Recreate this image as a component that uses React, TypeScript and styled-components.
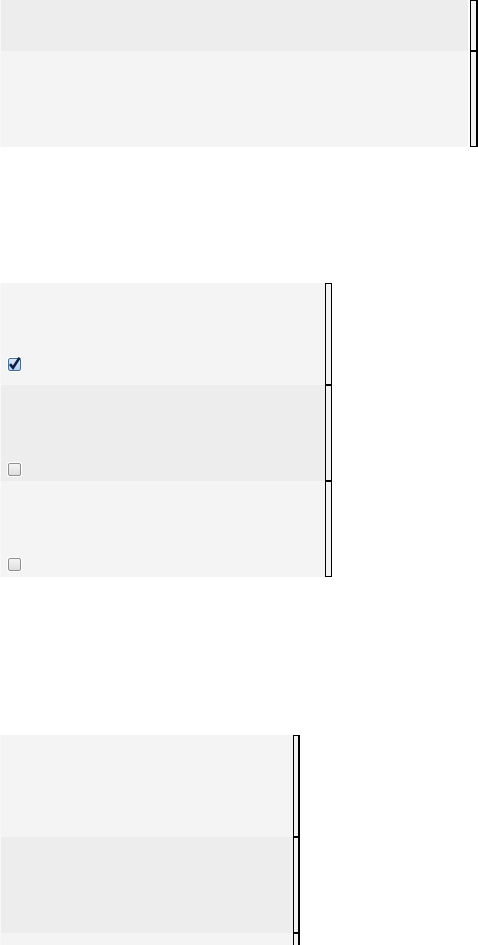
import styled, { createGlobalStyle } from "styled-components";

const Global = createGlobalStyle`
  html, body {
    margin: 0;
    padding: 0;
    background: #ffffff;
    font-family: "Liberation Sans", Arial, sans-serif;
  }
`;

const Page = styled.div`
  display: flex;
  flex-direction: column;
  width: 478px;
  height: 945px;
  overflow: hidden;
`;

const Group = styled.div<{ $width: number; $top: number }>`
  display: flex;
  flex-direction: column;
  width: ${({ $width }) => $width}px;
  margin-top: ${({ $top }) => $top}px;
  flex-shrink: 0;
`;

const Row = styled.div<{ $height: number }>`
  display: flex;
  height: ${({ $height }) => $height}px;
  flex-shrink: 0;
`;

const Cell = styled.div<{ $dark: boolean; $gap: number; $pad: number }>`
  flex: 1;
  display: flex;
  align-items: flex-start;
  padding: ${({ $pad }) => $pad}px 0 0 7px;
  margin-right: ${({ $gap }) => $gap}px;
  background: ${({ $dark }) => ($dark ? "#ededed" : "#f4f4f4")};
  border-left: 1px solid #f8f8f8;
`;

const Handle = styled.div<{ $width: number; $right: number }>`
  box-sizing: border-box;
  width: ${({ $width }) => $width}px;
  border: 1px solid #000;
  border-right-width: ${({ $right }) => $right}px;
  background: #f2f2f2;
`;

const Box = styled.span<{ $checked: boolean }>`
  box-sizing: border-box;
  display: inline-flex;
  align-items: center;
  justify-content: center;
  width: 13px;
  height: 13px;
  border-radius: 2px;
  border: 1px solid ${({ $checked }) => ($checked ? "#3d6ea8" : "#8f8f8f")};
  background: ${({ $checked }) =>
    $checked
      ? "linear-gradient(#dce8f7, #b8cfee)"
      : "linear-gradient(#f4f4f4, #dedede)"};
  box-shadow: 0 0 0 1px #ffffff;
`;

function Check({ checked }: { checked: boolean }) {
  return (
    <Box $checked={checked}>
      {checked && (
        <svg width="13" height="13" viewBox="0 0 13 13" style={{ overflow: "visible" }}>
          <path d="M2 6.2 L5 9.8 L11.6 -0.4" fill="none" stroke="#0d1f48" strokeWidth="2.6" />
        </svg>
      )}
    </Box>
  );
}

type RowData = { height: number; dark: boolean; check?: boolean; pad?: number };

const groups: { width: number; top: number; gap: number; handle: number; right: number; rows: RowData[] }[] = [
  {
    width: 478,
    top: 0,
    gap: 2,
    handle: 8,
    right: 2,
    rows: [
      { height: 51, dark: true },
      { height: 96, dark: false },
    ],
  },
  {
    width: 332,
    top: 136,
    gap: 0,
    handle: 7,
    right: 1,
    rows: [
      { height: 102, dark: false, check: true, pad: 75 },
      { height: 96, dark: true, check: false, pad: 78 },
      { height: 96, dark: false, check: false, pad: 77 },
    ],
  },
  {
    width: 300,
    top: 158,
    gap: 0,
    handle: 7,
    right: 2,
    rows: [
      { height: 102, dark: false },
      { height: 96, dark: true },
      { height: 96, dark: false },
    ],
  },
];

export default function App() {
  return (
    <Page>
      <Global />
      {groups.map((g, gi) => (
        <Group key={gi} $width={g.width} $top={g.top}>
          {g.rows.map((r, ri) => (
            <Row key={ri} $height={r.height}>
              <Cell $dark={r.dark} $gap={g.gap} $pad={r.pad ?? 75}>
                {r.check !== undefined && <Check checked={r.check} />}
              </Cell>
              <Handle $width={g.handle} $right={g.right} />
            </Row>
          ))}
        </Group>
      ))}
    </Page>
  );
}
